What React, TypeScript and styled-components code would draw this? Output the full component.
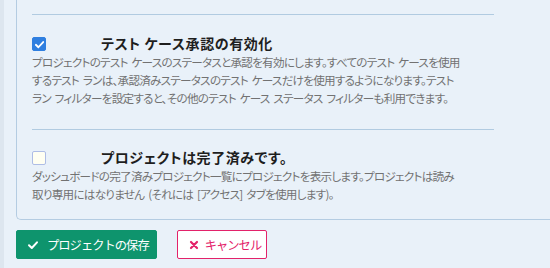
import React, { useState } from "react";
import styled, { createGlobalStyle } from "styled-components";

const GlobalStyle = createGlobalStyle`
  html, body {
    margin: 0;
    padding: 0;
    background: #e9f1f9;
  }
  body {
    font-family: "Noto Sans CJK JP", "Noto Sans", sans-serif;
    font-feature-settings: "palt";
  }
`;

const Page = styled.div`
  width: 550px;
  height: 268px;
  overflow: hidden;
  box-sizing: border-box;
  border-left: 4px solid #dde6ef;
  padding-left: 12px;
`;

const Panel = styled.div`
  width: 560px;
  box-sizing: border-box;
  border: 1px solid #b4cce2;
  border-top: none;
  border-right: none;
  border-radius: 0 0 0 5px;
  padding: 14px 0 16px 15px;
`;

const Separator = styled.div`
  width: 462px;
  height: 1px;
  background: #b1cbe1;
`;

const Section = styled.div<{ $top: number; $bottom: number }>`
  width: 462px;
  padding-top: ${(p) => p.$top}px;
  padding-bottom: ${(p) => p.$bottom}px;
`;

const OptionRow = styled.label`
  display: flex;
  align-items: center;
  height: 20px;
  cursor: pointer;
`;

const Box = styled.span<{ $checked: boolean }>`
  width: 14px;
  height: 14px;
  box-sizing: border-box;
  border-radius: 2px;
  display: flex;
  align-items: center;
  justify-content: center;
  margin-top: 2px;
  background: ${(p) => (p.$checked ? "#2f7fe0" : "#fffff2")};
  border: 1px solid ${(p) => (p.$checked ? "#2f7fe0" : "#aebde6")};
`;

const Title = styled.span`
  margin-left: 55px;
  font-size: 14px;
  font-weight: 700;
  letter-spacing: 0.6px;
  color: #1e1e1e;
  line-height: 20px;
`;

const Description = styled.div`
  font-size: 11.6px;
  letter-spacing: -0.75px;
  word-spacing: 2px;
  line-height: 18px;
  color: #727272;
  white-space: nowrap;
`;

const Actions = styled.div`
  display: flex;
  align-items: center;
  margin-top: 10px;
`;

const Button = styled.button<{ $variant: "primary" | "danger" }>`
  display: flex;
  align-items: center;
  gap: ${(p) => (p.$variant === "primary" ? "8px" : "6px")};
  height: 29px;
  margin: 0 20px 0 0;
  box-sizing: border-box;
  padding: ${(p) => (p.$variant === "primary" ? "0 7px 0 10px" : "0 5px 0 11px")};
  font-family: inherit;
  font-size: 12.3px;
  letter-spacing: -1px;
  border-radius: 2px;
  cursor: pointer;
  background: ${(p) => (p.$variant === "primary" ? "#0e946d" : "#ffffff")};
  color: ${(p) => (p.$variant === "primary" ? "#ffffff" : "#e3226a")};
  border: 1px solid ${(p) => (p.$variant === "primary" ? "#0e946d" : "#e3226a")};
`;

const CheckMark = ({ size, color }: { size: number; color: string }) => (
  <svg width={size} height={size} viewBox="0 0 12 12">
    <path d="M2 6.3 L4.8 9 L10 3.3" fill="none" stroke={color} strokeWidth="2" strokeLinecap="round" strokeLinejoin="round" />
  </svg>
);

const Cross = () => (
  <svg width="10" height="10" viewBox="0 0 10 10">
    <path d="M2 2 L8 8 M8 2 L2 8" stroke="#e3226a" strokeWidth="2.2" strokeLinecap="round" />
  </svg>
);

const Option = ({
  checked,
  onToggle,
  title,
  lines,
}: {
  checked: boolean;
  onToggle: () => void;
  title: string;
  lines: string[];
}) => (
  <>
    <OptionRow onClick={onToggle}>
      <Box $checked={checked}>{checked && <CheckMark size={11} color="#ffffff" />}</Box>
      <Title>{title}</Title>
    </OptionRow>
    <Description>
      {lines.map((l, i) => (
        <div key={i}>{l}</div>
      ))}
    </Description>
  </>
);

export default function App() {
  const [approval, setApproval] = useState(true);
  const [done, setDone] = useState(false);

  return (
    <>
      <GlobalStyle />
      <Page>
        <Panel>
          <Separator />
          <Section $top={18} $bottom={22}>
            <Option
              checked={approval}
              onToggle={() => setApproval((s) => !s)}
              title="テスト ケース承認の有効化"
              lines={[
                "プロジェクトのテスト ケースのステータスと承認を有効にします。すべてのテスト ケースを使用",
                "するテスト ランは、承認済みステータスのテスト ケースだけを使用するようになります。テスト",
                "ラン フィルターを設定すると、その他のテスト ケース ステータス フィルターも利用できます。",
              ]}
            />
          </Section>
          <Separator />
          <Section $top={17} $bottom={0}>
            <Option
              checked={done}
              onToggle={() => setDone((s) => !s)}
              title="プロジェクトは完了済みです。"
              lines={[
                "ダッシュボードの完了済みプロジェクト一覧にプロジェクトを表示します。プロジェクトは読み",
                "取り専用にはなりません (それには [アクセス] タブを使用します)。",
              ]}
            />
          </Section>
        </Panel>
        <Actions>
          <Button $variant="primary">
            <CheckMark size={12} color="#ffffff" />
            プロジェクトの保存
          </Button>
          <Button $variant="danger">
            <Cross />
            キャンセル
          </Button>
        </Actions>
      </Page>
    </>
  );
}
